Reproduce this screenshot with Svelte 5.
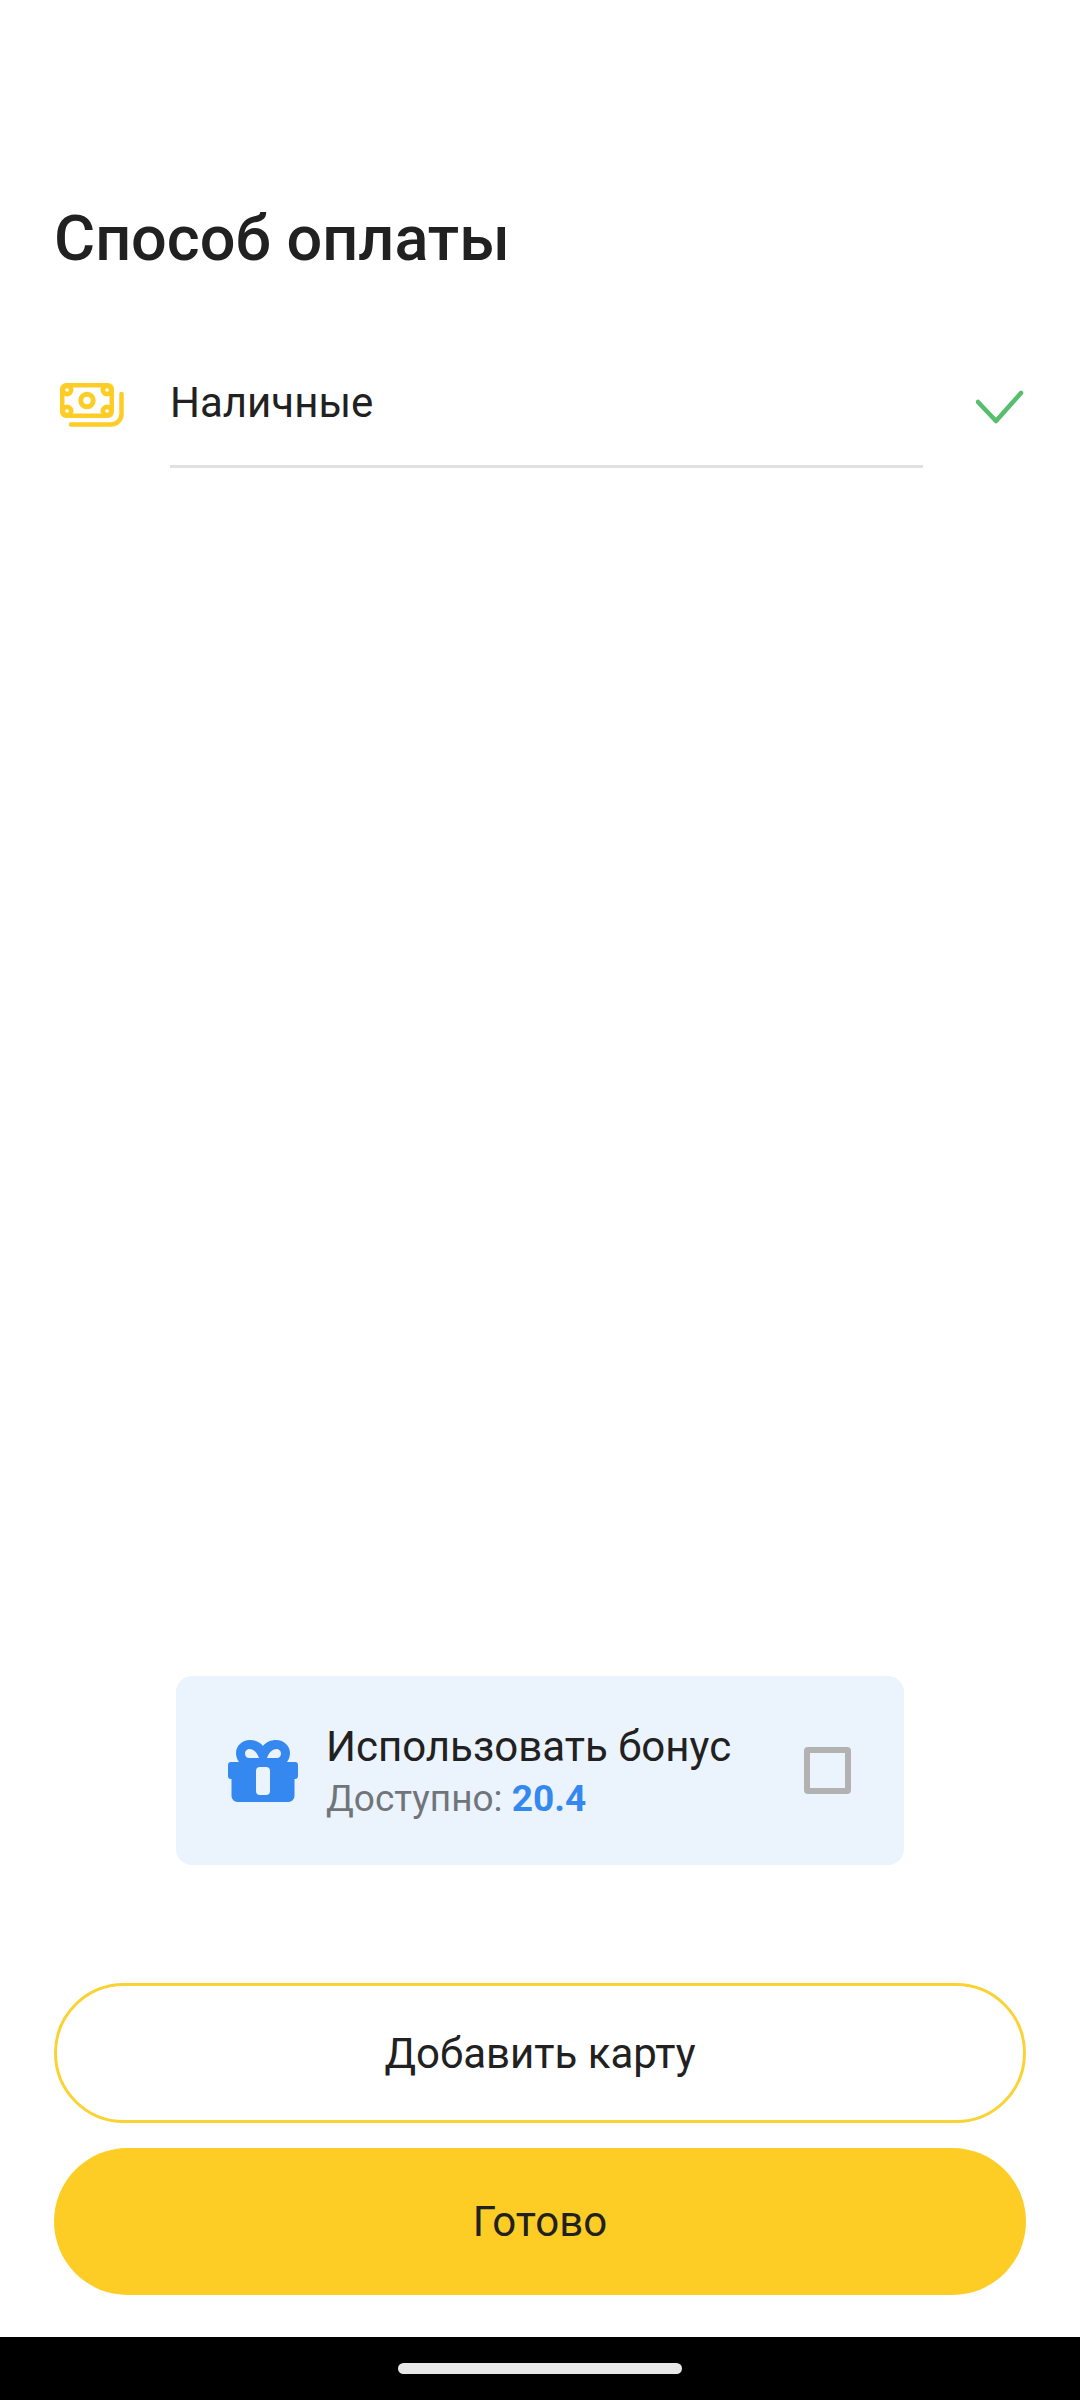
<script>
	let bonus = $state(false);
	const available = 20.4;
</script>

<div class="screen">
	<main>
		<h1>Способ оплаты</h1>

		<div class="method">
			<div class="method-icon">
				<svg width="64" height="44" viewBox="0 0 64 44" fill="none">
					<rect x="2.25" y="2.25" width="49.5" height="30.5" rx="4" stroke="#fdcd25" stroke-width="4.5" />
					<circle cx="27" cy="17.500" r="6.200" stroke="#fdcd25" stroke-width="5" />
					<g fill="#fdcd25">
						<circle cx="7" cy="7" r="6.500" />
						<circle cx="47" cy="7" r="6.500" />
						<circle cx="7" cy="28" r="6.500" />
						<circle cx="47" cy="28" r="6.500" />
					</g>
					<g fill="#fff">
						<circle cx="7" cy="7" r="1.800" />
						<circle cx="47" cy="7" r="1.800" />
						<circle cx="7" cy="28" r="1.800" />
						<circle cx="47" cy="28" r="1.800" />
					</g>
					<path d="M11 41.500h40a10.500 10.500 0 0 0 10.500-10.500V11" stroke="#fdcd25" stroke-width="4.500" stroke-linecap="round" />
				</svg>
			</div>
			<div class="method-name">Наличные</div>
			<div class="method-check">
				<svg width="50" height="34" viewBox="0 0 50 34" fill="none">
					<path d="M2 12l18 19L45 3" stroke="#55bf6b" stroke-width="4.500" stroke-linecap="round" stroke-linejoin="round" />
				</svg>
			</div>
		</div>

		<div class="spacer"></div>

		<div class="bonus">
			<svg class="gift" width="70" height="62" viewBox="0 0 70 62">
				<path fill-rule="evenodd" fill="#3488f0" d="M35 6C32 2 27 0 22 0 14 0 8 6 8 13c0 4 1.500 7 3 9H3a3 3 0 0 0-3 3v11a3 3 0 0 0 3 3h.5v17a6 6 0 0 0 6 6h51a6 6 0 0 0 6-6V39h.5a3 3 0 0 0 3-3V25a3 3 0 0 0-3-3h-8c1.500-2 3-5 3-9 0-7-6-13-14-13-5 0-10 2-13 6zM31 18c-2-6-6-9-9.500-9C18.500 9 17 11.500 17 13.500c0 3 2 4.500 4 4.500zM39 18c2-6 6-9 9.500-9 3 0 4.500 2.500 4.500 4.500 0 3-2 4.500-4 4.500zM32 27h6a4 4 0 0 1 4 4v20a4 4 0 0 1-4 4h-6a4 4 0 0 1-4-4V31a4 4 0 0 1 4-4z" />
			</svg>
			<div class="bonus-text">
				<div class="bonus-title">Использовать бонус</div>
				<div class="bonus-sub">Доступно: <b>{available}</b></div>
			</div>
			<button class="checkbox" class:on={bonus} aria-label="Использовать бонус" onclick={() => (bonus = !bonus)}></button>
		</div>

		<div class="buttons">
			<button class="btn outline">Добавить карту</button>
			<button class="btn filled">Готово</button>
		</div>
	</main>

	<div class="navbar">
		<div class="pill"></div>
	</div>
</div>

<style>
	:global(body) {
		margin: 0;
		background: #fff;
	}

	.screen {
		width: 1080px;
		height: 2400px;
		display: flex;
		flex-direction: column;
		font-family: Roboto, 'Noto Sans', sans-serif;
		color: #212121;
	}

	main {
		flex: 1;
		display: flex;
		flex-direction: column;
		padding: 0 54px 42px;
		min-height: 0;
	}

	h1 {
		margin: 0;
		padding-top: 204px;
		font-size: 63px;
		line-height: 70px;
		font-weight: 500;
	}

	.method {
		margin-top: 52px;
		display: flex;
		height: 142px;
	}

	.method-icon {
		width: 116px;
		padding: 57px 0 0 6px;
		box-sizing: border-box;
	}

	.method-name {
		flex: 1;
		box-sizing: border-box;
		font-size: 42px;
		line-height: 49px;
		padding-top: 52px;
		border-bottom: 3px solid #e0e0e0;
	}

	.method-check {
		width: 103px;
		display: flex;
		justify-content: flex-end;
		padding-top: 64px;
	}

	.spacer {
		flex: 1;
	}

	.bonus {
		align-self: center;
		width: 728px;
		height: 189px;
		box-sizing: border-box;
		padding: 0 53px 0 52px;
		background: #ebf3fc;
		border-radius: 16px;
		display: flex;
		align-items: center;
	}

	.gift {
		flex: none;
	}

	.bonus-text {
		flex: 1;
		padding-left: 28px;
	}

	.bonus-title {
		font-size: 42px;
		line-height: 49px;
	}

	.bonus-sub {
		font-size: 37px;
		line-height: 43px;
		margin-top: 6px;
		color: #70757a;
	}

	.bonus-sub b {
		font-weight: 700;
		color: #3488f0;
	}

	.checkbox {
		flex: none;
		width: 47px;
		height: 47px;
		padding: 0;
		background: none;
		border: 6px solid #b2b2b2;
		border-radius: 4px;
		box-sizing: border-box;
	}

	.buttons {
		margin-top: 118px;
		display: flex;
		flex-direction: column;
		gap: 25px;
	}

	.btn {
		width: 972px;
		padding: 0;
		border-radius: 74px;
		box-sizing: border-box;
		font-family: inherit;
		font-size: 42px;
		color: #212121;
		background: none;
	}

	.outline {
		height: 140px;
		border: 3px solid #fbd233;
	}

	.filled {
		height: 147px;
		border: none;
		background: #fdcd25;
	}

	.navbar {
		height: 63px;
		flex: none;
		background: #000;
		display: flex;
		justify-content: center;
		padding-top: 26px;
		box-sizing: border-box;
	}

	.pill {
		width: 284px;
		height: 11px;
		border-radius: 6px;
		background: #e8e8e8;
	}
</style>
